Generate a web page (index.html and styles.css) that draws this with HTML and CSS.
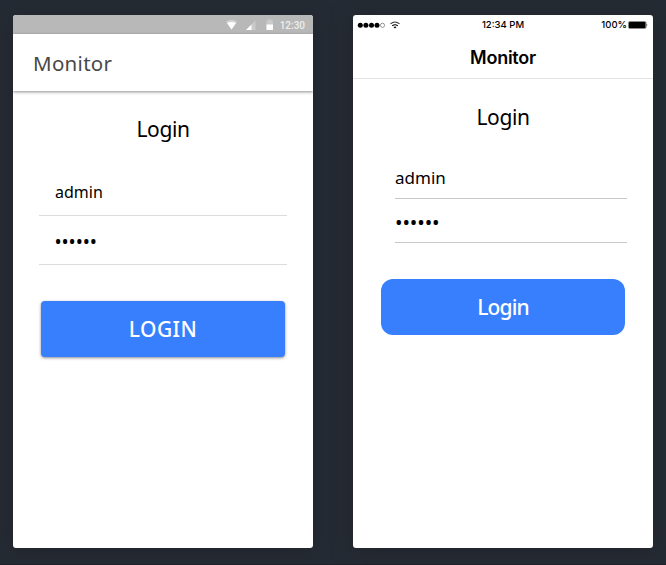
FILE: index.html
```html
<!DOCTYPE html>
<html lang="en">
<head>
<meta charset="utf-8">
<title>Monitor</title>
<link rel="stylesheet" href="styles.css">
</head>
<body>
<main class="stage">
  <section class="phone android">
    <div class="status">
      <svg class="status-icons" width="60" height="19" viewBox="0 0 60 19">
        <path d="M4 6.500Q9.500 3 15 6.500L9.500 14.500Z" fill="#d2d2d2"/><path d="M5 8Q9.500 6 14 8L9.500 14.500Z" fill="#fff"/>
        <path d="M24 15L33.500 5.500V15Z" fill="#cacaca"/><path d="M24 15L29.500 9.500V15Z" fill="#fff"/>
        <path d="M44.500 5.500H46V4.500H49.500V5.500H51V15H44.500Z" fill="#cacaca"/><path d="M44.500 9.500H51V15H44.500Z" fill="#fff"/>
      </svg>
      <span class="time">12:30</span>
    </div>
    <header class="bar">Monitor</header>
    <h1 class="title">Login</h1>
    <div class="fields">
      <div class="field">admin</div>
      <div class="field secret">••••••</div>
    </div>
    <button class="submit">LOGIN</button>
  </section>
  <section class="phone ios">
    <div class="status">
      <svg width="60" height="20" viewBox="0 0 60 20">
        <g fill="#000"><circle cx="7.300" cy="10.300" r="2.500"/><circle cx="12.900" cy="10.300" r="2.500"/><circle cx="18.500" cy="10.300" r="2.500"/><circle cx="24" cy="10.300" r="2.500"/></g>
        <circle cx="29.500" cy="10.300" r="2.100" fill="none" stroke="#555" stroke-width=".6"/>
        <path d="M37.500 8.900Q42 5 46.500 8.900" fill="none" stroke="#333" stroke-width="1.100"/>
        <path d="M39.200 10.900Q42 8.600 44.800 10.900" fill="none" stroke="#000" stroke-width="1.200"/>
        <path d="M40.500 12.100Q42 11 43.500 12.100L42 13.600Z" fill="#000"/>
      </svg>
      <span class="time">12:34 PM</span>
      <span class="battery">100%
        <svg width="20" height="8" viewBox="0 0 20 8"><rect x=".5" y=".5" width="17.500" height="7" rx="1.200" fill="#fff" stroke="#555" stroke-width=".7"/><rect x="1" y="1" width="16.500" height="6" rx=".6"/><path d="M18.600 2.500Q20 4 18.600 5.500Z"/></svg>
      </span>
    </div>
    <header class="bar">Monitor</header>
    <h1 class="title">Login</h1>
    <div class="fields">
      <div class="field">admin</div>
      <div class="field secret">••••••</div>
    </div>
    <button class="submit">Login</button>
  </section>
</main>
</body>
</html>
```
FILE: styles.css
```css
* { box-sizing: border-box; }

body {
  margin: 0;
  background: #252b34;
  font-family: "Noto Sans", "Open Sans", sans-serif;
  color: #000;
}

.stage {
  display: flex;
  gap: 40px;
  height: 565px;
  padding: 15px 13px 17px;
  border-bottom: 1px solid #20232b;
}

.phone {
  flex: none;
  width: 300px;
  height: 533px;
  overflow: hidden;
  border-radius: 3px;
  background: #fff;
  box-shadow: 0 2px 20px rgba(30, 28, 36, .5);
}

.title {
  margin: 0;
  font-size: 21px;
  font-weight: 400;
  line-height: 30px;
  letter-spacing: -.4px;
  text-align: center;
}

.submit {
  display: block;
  width: 244px;
  height: 56px;
  padding: 0;
  border: 0;
  background: #387ffe;
  color: #fff;
  font-family: inherit;
  font-size: 21px;
}

.android .status {
  display: flex;
  align-items: center;
  justify-content: flex-end;
  height: 19px;
  padding-right: 8px;
  background: #b8b8b8;
  color: #eee;
  font: 500 10px/19px Roboto, sans-serif;
}

.android .status-icons { margin-right: -6px; }
.android .time { width: 29px; white-space: nowrap; text-align: right; padding-top: 1px; }

.android .bar {
  height: 57px;
  padding-left: 20px;
  box-shadow: 0 1px 3px rgba(0, 0, 0, .45);
  color: #484848;
  font-size: 20.500px;
  line-height: 59px;
  letter-spacing: .3px;
}

.android .title { margin-top: 23px; }
.android .fields { margin: 32px 26px 0; }

.android .field {
  height: 49px;
  padding-left: 16px;
  border-bottom: 1px solid #dcdcdc;
  font-size: 16px;
  line-height: 48px;
}

.android .field:first-child { height: 40px; line-height: 24px; padding-top: 4px; }

.android .secret { padding-left: 15.500px; font-size: 19px; line-height: 52px; letter-spacing: -.1px; }

.android .submit {
  margin: 36px 28px 0;
  border-radius: 4px;
  box-shadow: 0 1px 3px rgba(0, 0, 0, .45);
  font-weight: 500;
  letter-spacing: .4px;
}

.ios .status {
  display: grid;
  grid-template-columns: 1fr auto 1fr;
  align-items: center;
  height: 20px;
  font: 500 9.5px/20px Inter, sans-serif;
}

.ios .battery {
  display: flex;
  align-items: center;
  justify-content: flex-end;
  gap: 1px;
  padding-right: 5px;
}

.ios .bar {
  height: 44px;
  border-bottom: 1px solid #e3e3e3;
  font: 600 18px/46px Inter, sans-serif;
  letter-spacing: -.25px;
  text-align: center;
}

.ios .title { margin-top: 23px; }
.ios .fields { margin: 30px 26px 0 42px; }

.ios .field {
  height: 44px;
  border-bottom: 1px solid #c8c8c8;
  font-size: 17px;
  line-height: 43px;
}

.ios .field:first-child { height: 37px; line-height: 32px; }

.ios .secret { font-size: 20px; line-height: 47px; letter-spacing: -.1px; }

.ios .submit {
  margin: 36px 28px 0;
  border-radius: 12px;
  font-weight: 500;
  letter-spacing: -.9px;
}
```
